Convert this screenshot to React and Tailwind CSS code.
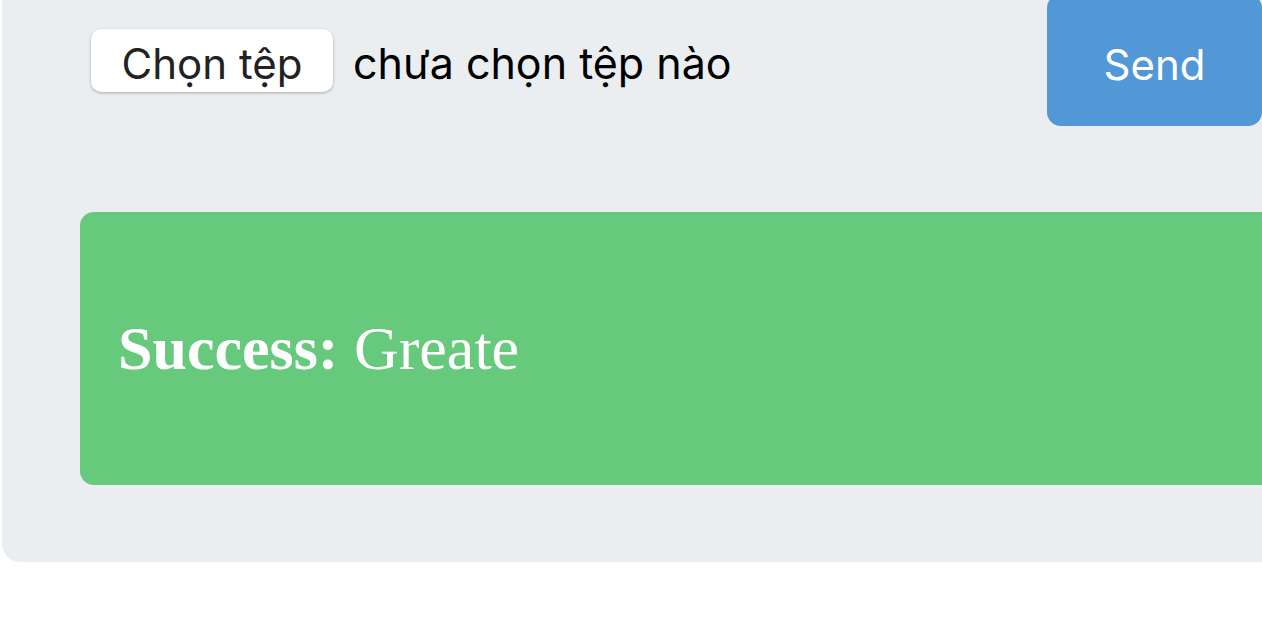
export default function App() {
  return (
    <div className="h-[640px] w-[1262px] overflow-hidden bg-white">
      <div className="ml-[2px] w-[1320px] rounded-bl-[18px] bg-[#ebeef0] pb-[77px]">
        <div className="flex w-[1260px] items-start justify-between">
          <div className="flex items-center gap-[20px] pl-[89px] pt-[29px] font-['Inter',sans-serif] text-[43px] leading-none">
            <span className="flex h-[63px] w-[242px] items-center justify-center rounded-[10px] bg-white pt-[6px] text-[42px] text-[#222] shadow-[0_1px_3px_rgba(0,0,0,0.3)]">
              Chọn tệp
            </span>
            <span className="pt-[6px] text-black">chưa chọn tệp nào</span>
          </div>
          <button className="-mt-[6px] flex h-[132px] w-[215px] items-center justify-center rounded-[14px] bg-[#5297d6] pt-[8px] font-['Inter',sans-serif] text-[42px] text-white">
            Send
          </button>
        </div>
        <div className="ml-[78px] mt-[86px] flex h-[273px] items-center rounded-l-[14px] bg-[#66c97b] pl-[38px] font-['Liberation_Serif',serif] text-[62px] text-white">
          <p>
            <strong>Success:</strong> Greate
          </p>
        </div>
      </div>
    </div>
  );
}
